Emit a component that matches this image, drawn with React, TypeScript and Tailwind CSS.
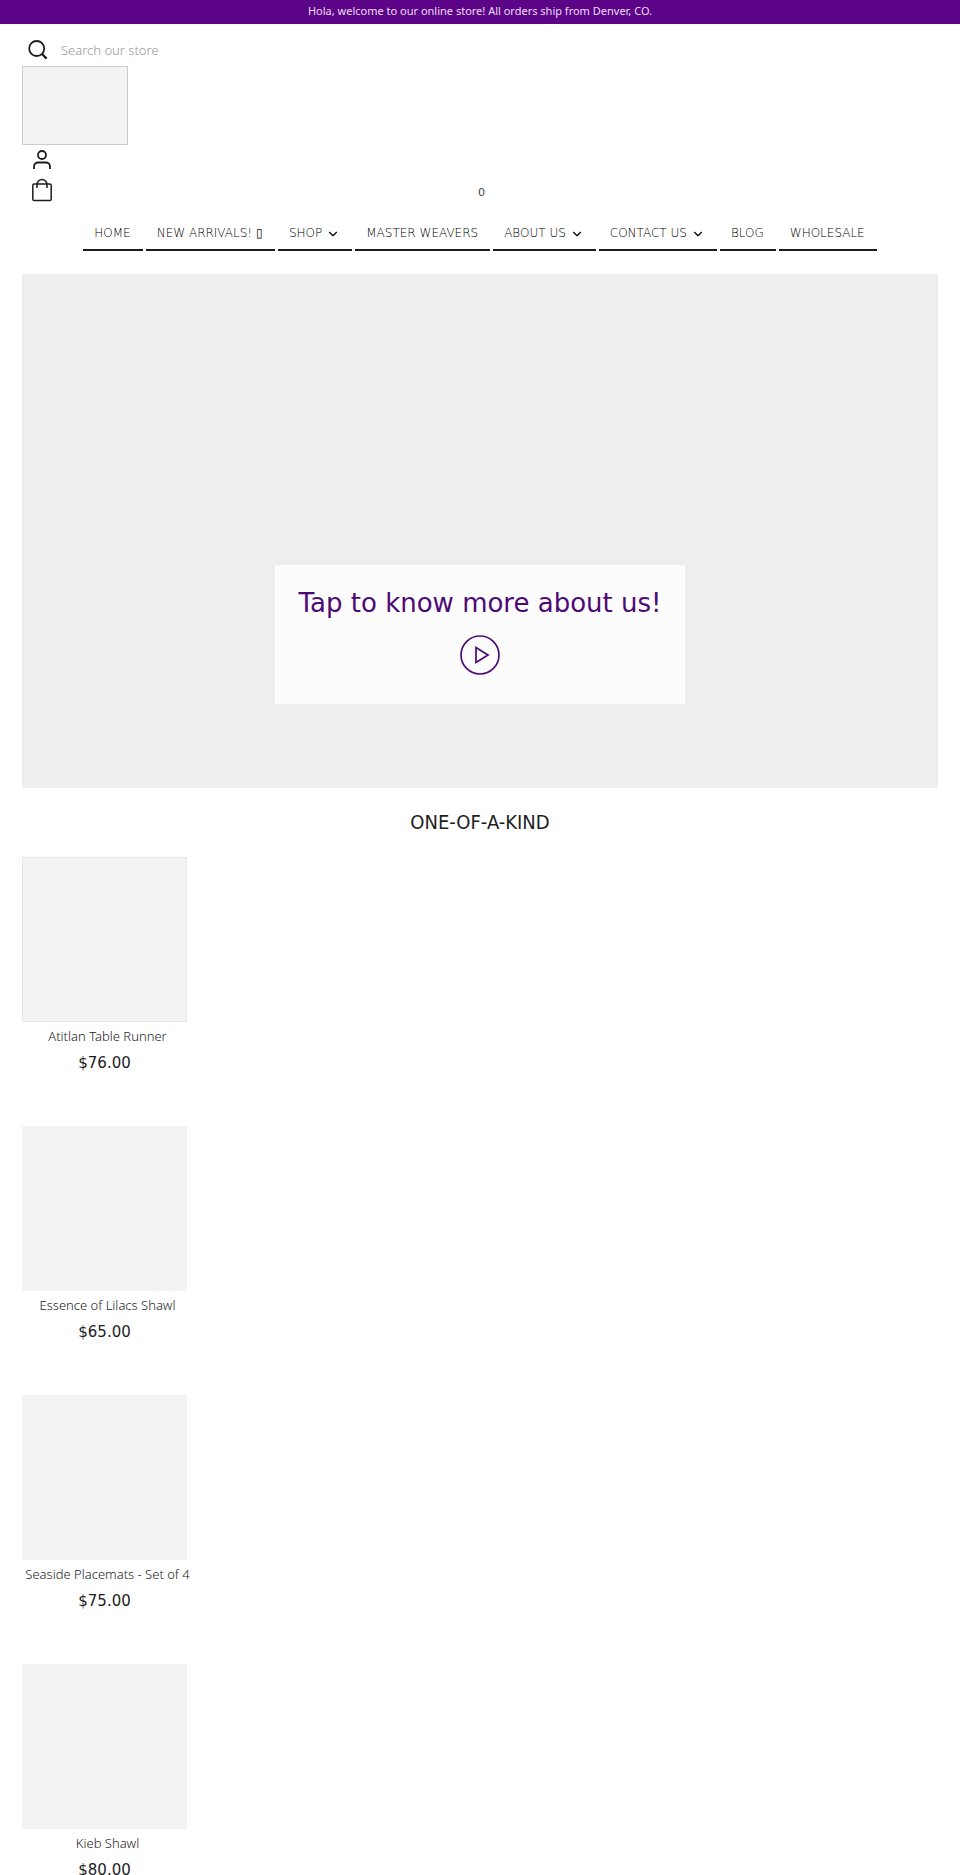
import { ChevronDown } from "lucide-react";

interface NavItem {
  label: string;
  hasMenu?: boolean;
}

interface Product {
  name: string;
  price: string;
  outlined?: boolean;
}

const navItems: NavItem[] = [
  { label: "HOME" },
  { label: "NEW ARRIVALS! ▯" },
  { label: "SHOP", hasMenu: true },
  { label: "MASTER WEAVERS" },
  { label: "ABOUT US", hasMenu: true },
  { label: "CONTACT US", hasMenu: true },
  { label: "BLOG" },
  { label: "WHOLESALE" },
];

const products: Product[] = [
  { name: "Atitlan Table Runner", price: "$76.00", outlined: true },
  { name: "Essence of Lilacs Shawl", price: "$65.00" },
  { name: "Seaside Placemats - Set of 4", price: "$75.00" },
  { name: "Kieb Shawl", price: "$80.00" },
];

function SearchIcon() {
  return (
    <svg viewBox="0 0 20 20" className="size-5" fill="none" stroke="currentColor" strokeWidth="1.8" aria-hidden="true">
      <circle cx="8.7" cy="8.5" r="7.5" />
      <path d="M13.8 13.8 L18.6 18.6" strokeWidth="2.2" />
    </svg>
  );
}

function AccountIcon() {
  return (
    <svg viewBox="0 0 20 20" className="size-5" fill="none" stroke="currentColor" strokeWidth="1.8" aria-hidden="true">
      <circle cx="10" cy="5" r="4" />
      <path d="M2 19 V16.5 A4 4 0 0 1 6 12.5 H14 A4 4 0 0 1 18 16.5 V19" />
    </svg>
  );
}

function BagIcon() {
  return (
    <svg viewBox="0 0 20 24" className="h-6 w-5" fill="none" stroke="currentColor" strokeWidth="1.5" aria-hidden="true">
      <rect x="0.8" y="6" width="18.4" height="16.6" rx="1.4" />
      <path d="M5 10 V6.5 A5 5 0 0 1 15 6.5 V10" />
    </svg>
  );
}

function Header() {
  return (
    <header className="px-[22px] pt-4">
      <form role="search" className="flex h-[26px] items-start" onSubmit={(event) => event.preventDefault()}>
        <button type="submit" aria-label="Search" className="ml-[6px] flex h-5 w-7 items-center">
          <SearchIcon />
        </button>
        <input
          type="search"
          aria-label="Search our store"
          placeholder="Search our store"
          className="ml-[5px] h-5 flex-1 font-['Noto_Sans',sans-serif] text-[13px] font-light outline-none placeholder:text-[#999999]"
        />
      </form>
      <a href="#" aria-label="Store home" className="block h-[79px] w-[106px] border border-[#cccccc] bg-[#f3f3f3]" />
      <a href="#" aria-label="Account" className="mt-[5px] ml-[10px] block w-5">
        <AccountIcon />
      </a>
      <a href="#" aria-label="Cart" className="mt-2 flex h-6 items-center">
        <span className="ml-[10px] w-5">
          <BagIcon />
        </span>
        <span className="mr-[27px] flex-1 pt-1.5 text-center text-[11px] leading-4 text-[#444444]">0</span>
      </a>
      <nav aria-label="Main" className="mt-[21px] flex flex-wrap justify-center gap-[3px]">
        {navItems.map((item) => (
          <a key={item.label} href="#" className="flex h-7 gap-1 border-b-2 border-[#1c1d1d] pr-3 pl-[11px] text-xs leading-5 font-light whitespace-nowrap text-black">
            {item.label}
            {item.hasMenu && <ChevronDown className="mt-1 size-[14px]" strokeWidth={2} aria-hidden="true" />}
          </a>
        ))}
      </nav>
    </header>
  );
}

function Hero() {
  return (
    <section className="mx-[22px] mt-[23px] flex h-[514px] flex-col items-center justify-end bg-[#eeeeee] pb-[84px]">
      <div className="flex h-[139px] flex-col items-center bg-[#fcfcfc] px-6 pt-[22px] text-[#4d0a75]">
        <h1 className="text-[26px] leading-8">Tap to know more about us!</h1>
        <button type="button" aria-label="Play video" className="mt-4">
          <svg viewBox="0 0 40 40" className="size-10" fill="none" stroke="currentColor" strokeWidth="1.7" aria-hidden="true">
            <circle cx="20" cy="20" r="19" />
            <path d="M16 12.5 V27.5 L28 20 Z" />
          </svg>
        </button>
      </div>
    </section>
  );
}

function ProductCard({ product }: { product: Product }) {
  return (
    <li className="w-[165px]">
      <a href="#" className="flex flex-col items-center">
        <span className={product.outlined ? "h-[165px] w-full border border-[#e6e6e6] bg-[#f3f3f3]" : "h-[165px] w-full bg-[#f3f3f3]"} />
        <span className="mt-1 pl-[6px] font-['Noto_Sans',sans-serif] text-[13px] leading-5 font-light whitespace-nowrap">{product.name}</span>
        <span className="mt-[7px] text-[15px] leading-5">{product.price}</span>
      </a>
    </li>
  );
}

export default function App() {
  return (
    <div className="bg-white font-['DejaVu_Sans',sans-serif] text-[#1c1d1d]">
      <p className="bg-[#5c0488] pb-0.5 text-center font-['Noto_Sans',sans-serif] text-[11px] leading-[22px] text-[#eeddf5]">
        Hola, welcome to our online store! All orders ship from Denver, CO.
      </p>
      <Header />
      <main>
        <Hero />
        <section className="px-[22px] pt-5">
          <h2 className="text-center font-['DejaVu_Sans_Condensed',sans-serif] text-xl leading-7">ONE-OF-A-KIND</h2>
          <ul className="mt-[21px] flex flex-col gap-[53px]">
            {products.map((product) => (
              <ProductCard key={product.name} product={product} />
            ))}
          </ul>
        </section>
      </main>
    </div>
  );
}
